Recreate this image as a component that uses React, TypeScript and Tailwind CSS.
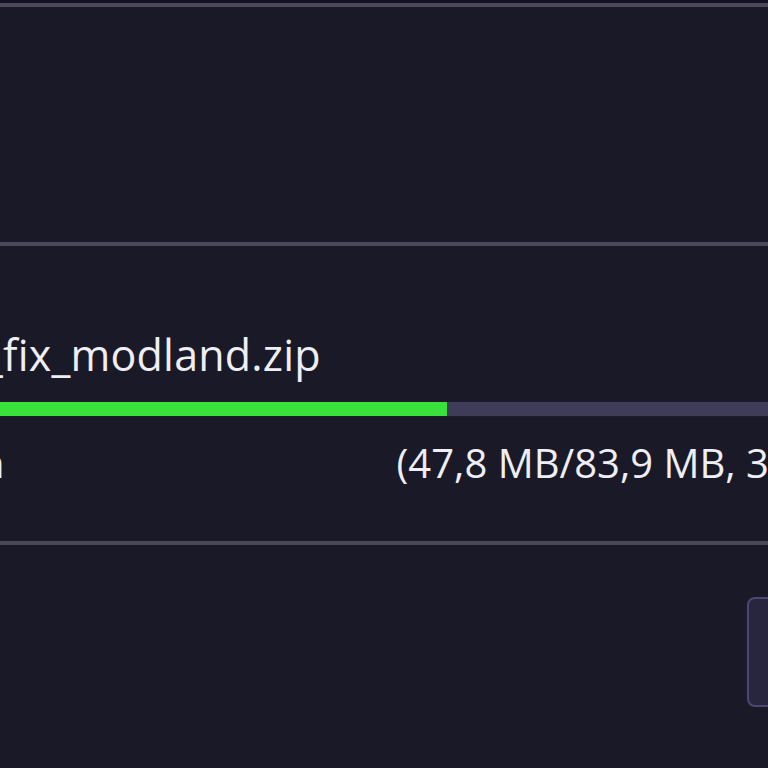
import React from "react";

export default function App() {
  return (
    <div
      className="w-[768px] h-[768px] overflow-hidden bg-[#1a1927] flex flex-col"
      style={{ fontFamily: '"Open Sans", "Noto Sans", sans-serif' }}
    >
      <div className="h-[3px] bg-[#13111f] shrink-0" />
      <div className="h-[4px] bg-[#4a4859] shrink-0" />
      <div className="h-[235px] shrink-0" />
      <div className="h-[4px] bg-[#4a4859] shrink-0" />
      <div className="h-[295px] shrink-0 flex flex-col">
        <div className="h-[84px] shrink-0" />
        <div className="h-[50px] shrink-0 flex items-end whitespace-nowrap text-[43px] leading-[50px] text-[#eeeef4] tracking-[0.2px] ml-[-16px]">
          _fix_modland.zip
        </div>
        <div className="h-[21px] shrink-0" />
        <div className="h-[16px] shrink-0 flex bg-[#3f3c5a] border-y border-[#1e1c2c]">
          <div className="w-[447px] h-full bg-[#38e23a]" />
        </div>
        <div className="h-[24px] shrink-0" />
        <div className="h-[44px] shrink-0 flex items-center whitespace-nowrap text-[40px] leading-[44px] text-[#eeeef4]">
          <span className="ml-[-20px]">n</span>
          <span className="ml-[392px]">(47,8 MB/83,9 MB, 3</span>
        </div>
      </div>
      <div className="h-[4px] bg-[#4a4859] shrink-0" />
      <div className="flex-1 flex pt-[52px] pl-[747px]">
        <div className="w-[60px] h-[110px] shrink-0 rounded-[8px] border-2 border-[#4a4770] bg-[#28253f]" />
      </div>
    </div>
  );
}
